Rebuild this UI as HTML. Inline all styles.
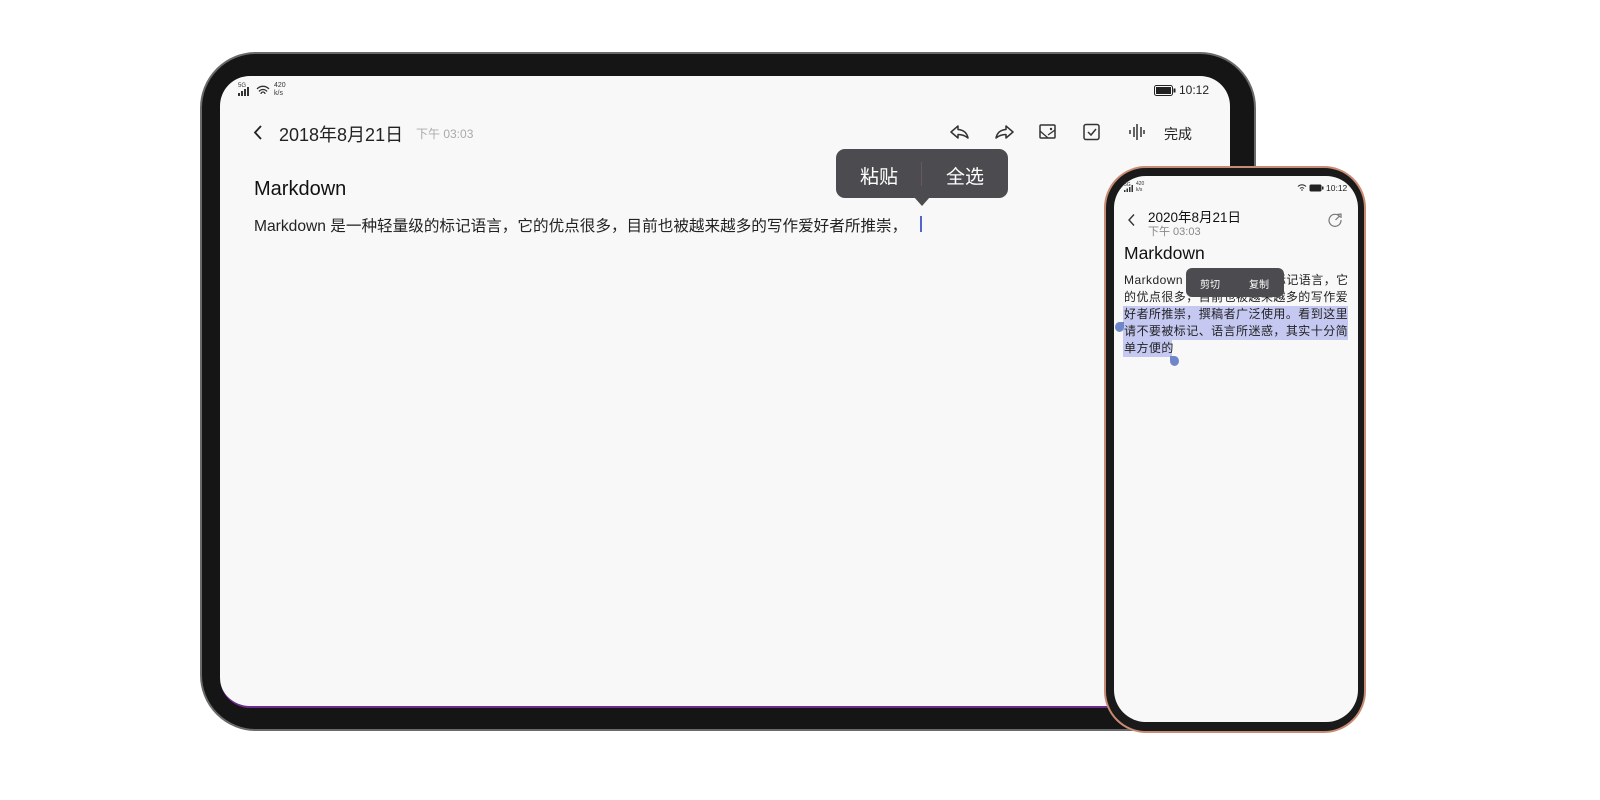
<!DOCTYPE html>
<html><head><meta charset="utf-8"><style>
*{margin:0;padding:0;box-sizing:border-box}
body{width:1600px;height:800px;background:#fff;position:relative;overflow:hidden;font-family:"Liberation Sans","Noto Sans CJK SC",sans-serif;color:#222}
.abs{position:absolute}
.tab{left:200px;top:52px;width:1056px;height:679px;background:#151515;border-radius:56px;border:2px solid #6a6a6a}
.tscr{left:220px;top:76px;width:1010px;height:632px;background:#f8f8f8;border-radius:30px;border-bottom:2px solid #6b2c8a}
.ph{left:1104px;top:166px;width:262px;height:567px;background:#1a1a1a;border-radius:42px;border:2px solid #c88a74}
.pscr{left:1114px;top:176px;width:244px;height:546px;background:#f8f8f8;border-radius:32px}
.pop{background:#4b4b50;color:#fff;border-radius:9px}
.sel{background:#c5c9f2}
</style></head><body>
<div class="abs tab"></div>
<div class="abs tscr"></div>
<div class="abs" style="left:238px;top:83px;font-size:6px;color:#333">5G</div>
<svg class="abs" style="left:238px;top:86px" width="14" height="10"><rect x="0" y="7" width="2" height="3" fill="#333"/><rect x="3" y="5" width="2" height="5" fill="#333"/><rect x="6" y="3" width="2" height="7" fill="#333"/><rect x="9" y="1" width="2" height="9" fill="#333"/></svg>
<svg class="abs" style="left:256px;top:85px" width="14" height="11"><path d="M1 4a8 8 0 0 1 12 0M3 6.5a5 5 0 0 1 8 0M5 9a2 2 0 0 1 4 0" stroke="#333" stroke-width="1.3" fill="none"/></svg>
<div class="abs" style="left:274px;top:82px;font-size:7px;line-height:8px;color:#333">420<br>k/s</div>
<svg class="abs" style="left:1154px;top:85px" width="22" height="11"><rect x="0.5" y="0.5" width="18" height="10" rx="2" fill="none" stroke="#222"/><rect x="2" y="2" width="15" height="7" fill="#222"/><rect x="19.5" y="3.5" width="2" height="4" fill="#222"/></svg>
<div class="abs" style="left:1179px;top:83px;font-size:12px;color:#222">10:12</div>
<svg class="abs" style="left:252px;top:124px" width="12" height="17"><path d="M9 2L3 8.5L9 15" stroke="#222" stroke-width="1.8" fill="none"/></svg>
<div class="abs" style="left:279px;top:121px;font-size:18px;color:#222">2018年8月21日</div>
<div class="abs" style="left:416px;top:125px;font-size:12px;color:#aaa">下午 03:03</div>
<svg class="abs" style="left:948px;top:122px" width="24" height="20"><path d="M10 4L3 10L10 16V12.5C14 12.5 17 13.5 20 16C19 11 16 8 10 7.5Z" stroke="#333" stroke-width="1.5" fill="none" stroke-linejoin="round"/></svg>
<svg class="abs" style="left:992px;top:122px" width="24" height="20"><path d="M14 4L21 10L14 16V12.5C10 12.5 7 13.5 4 16C5 11 8 8 14 7.5Z" stroke="#333" stroke-width="1.5" fill="none" stroke-linejoin="round"/></svg>
<svg class="abs" style="left:1039px;top:123px" width="18" height="18"><rect x="1" y="2" width="15" height="13" rx="1" stroke="#333" stroke-width="1.5" fill="none"/><path d="M1 8L9 15M9 12L16 7" stroke="#333" stroke-width="1.3" fill="none"/><circle cx="12" cy="6" r="1.2" fill="#333"/></svg>
<svg class="abs" style="left:1083px;top:123px" width="18" height="18"><rect x="1" y="1.5" width="15" height="15" rx="2" stroke="#333" stroke-width="1.5" fill="none"/><path d="M5 9L8 12L13 6" stroke="#333" stroke-width="1.5" fill="none"/></svg>
<svg class="abs" style="left:1128px;top:124px" width="18" height="16"><path d="M2 6V10M6 3V13M9 0V16M13 3V13M16 6V10" stroke="#333" stroke-width="1.5"/></svg>
<div class="abs" style="left:1164px;top:124px;font-size:14px;color:#222">完成</div>
<div class="abs" style="left:254px;top:178px;font-size:20px;color:#111">Markdown</div>
<div class="abs" style="left:254px;top:214px;font-size:15.6px;color:#222;white-space:nowrap">Markdown 是一种轻量级的标记语言，它的优点很多，目前也被越来越多的写作爱好者所推崇，</div>
<div class="abs" style="left:920px;top:216px;width:1.5px;height:16px;background:#5563d0"></div>
<div class="abs pop" style="left:836px;top:149px;width:172px;height:49px"></div>
<div class="abs" style="left:914px;top:197px;width:0;height:0;border-left:8px solid transparent;border-right:8px solid transparent;border-top:9px solid #4b4b50"></div>
<div class="abs" style="left:860px;top:162px;font-size:19px;color:#fff">粘贴</div>
<div class="abs" style="left:921px;top:162px;width:1px;height:24px;background:#6a5560"></div>
<div class="abs" style="left:946px;top:162px;font-size:19px;color:#fff">全选</div>
<div class="abs ph"></div>
<div class="abs pscr"></div>
<div class="abs" style="left:1124px;top:182px;font-size:5px;color:#333">5G</div>
<svg class="abs" style="left:1124px;top:185px" width="10" height="7"><rect x="0" y="5" width="1.5" height="2" fill="#333"/><rect x="2.5" y="3.5" width="1.5" height="3.5" fill="#333"/><rect x="5" y="2" width="1.5" height="5" fill="#333"/><rect x="7.5" y="0" width="1.5" height="7" fill="#333"/></svg>
<div class="abs" style="left:1136px;top:181px;font-size:5px;line-height:6px;color:#333">420<br>k/s</div>
<svg class="abs" style="left:1297px;top:184px" width="10" height="7"><path d="M1 2.5a5.5 5.5 0 0 1 8 0M3 4.5a3 3 0 0 1 4 0" stroke="#333" stroke-width="1.1" fill="none"/><circle cx="5" cy="6" r=".8" fill="#333"/></svg>
<svg class="abs" style="left:1309px;top:184px" width="15" height="8"><rect x=".5" y=".5" width="12" height="7" rx="1.5" fill="#222"/><rect x="13" y="2.5" width="1.5" height="3" fill="#222"/></svg>
<div class="abs" style="left:1326px;top:183px;font-size:8.5px;color:#222">10:12</div>
<svg class="abs" style="left:1127px;top:213px" width="9" height="14"><path d="M7 1.5L2 7L7 12.5" stroke="#333" stroke-width="1.4" fill="none"/></svg>
<div class="abs" style="left:1148px;top:206px;font-size:13.5px;color:#111">2020年8月21日</div>
<div class="abs" style="left:1148px;top:223px;font-size:11px;color:#888">下午 03:03</div>
<svg class="abs" style="left:1328px;top:212px" width="15" height="15"><path d="M12 5A6 6 0 1 0 13 8M9 2.5L13 2V6M7.5 8L11 4.5" stroke="#777" stroke-width="1.2" fill="none"/></svg>
<div class="abs" style="left:1124px;top:243px;font-size:17.5px;color:#111">Markdown</div>
<div class="abs sel" style="left:1123px;top:306px;width:225px;height:17px"></div>
<div class="abs sel" style="left:1123px;top:323px;width:225px;height:17px"></div>
<div class="abs sel" style="left:1123px;top:340px;width:49px;height:17px"></div>
<div class="abs" style="left:1124px;top:272px;width:228px;font-size:12px;line-height:17px;color:#222;letter-spacing:.45px">Markdown 是一种轻量级的标记语言，它的优点很多，目前也被越来越多的写作爱好者所推崇，撰稿者广泛使用。看到这里请不要被标记、语言所迷惑，其实十分简单方便的</div>
<div class="abs" style="left:1115px;top:322px;width:9px;height:10px;background:#6f86c8;border-radius:50% 0 50% 50%"></div>
<div class="abs" style="left:1170px;top:356px;width:9px;height:10px;background:#6f86c8;border-radius:0 50% 50% 50%"></div>
<div class="abs pop" style="left:1186px;top:268px;width:98px;height:29px;border-radius:6px"></div>
<div class="abs" style="left:1200px;top:276px;font-size:10px;color:#fff">剪切</div>
<div class="abs" style="left:1249px;top:276px;font-size:10px;color:#fff">复制</div>
</body></html>
